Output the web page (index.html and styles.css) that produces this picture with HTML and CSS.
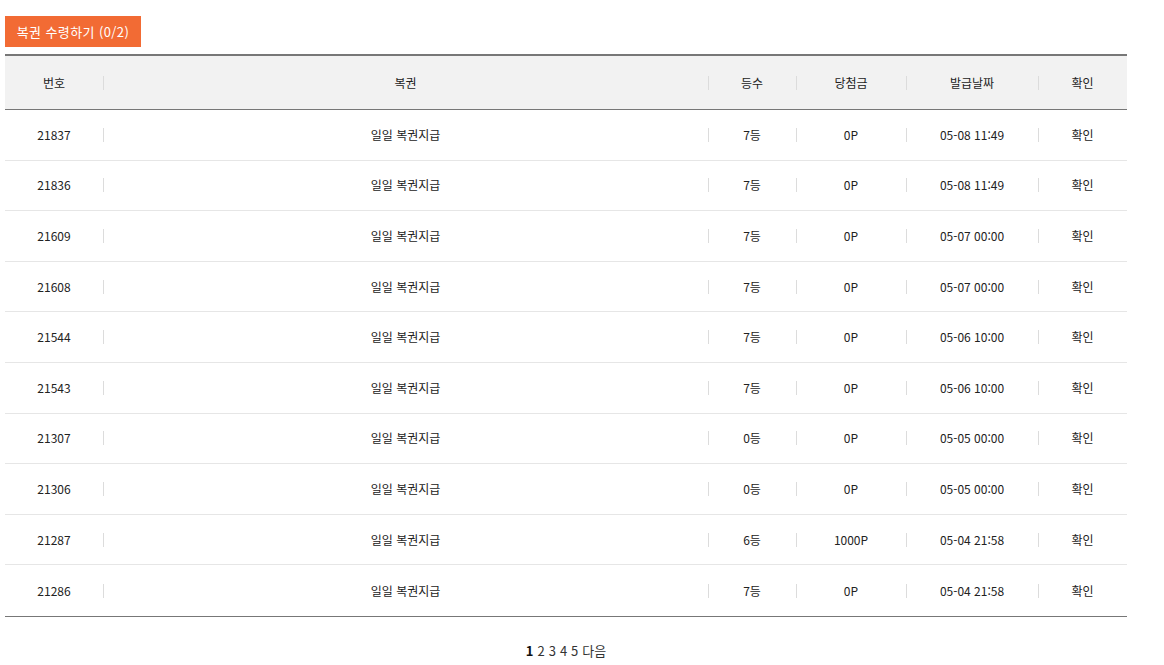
FILE: index.html
```html
<!DOCTYPE html>
<html lang="ko">
<head>
<meta charset="utf-8">
<title>복권</title>
<link rel="stylesheet" href="styles.css">
</head>
<body>
<div class="wrap">
  <div class="toolbar">
    <button class="claim-btn" type="button">복권 수령하기 (0/2)</button>
  </div>
  <div class="board">
    <div class="row head">
      <div class="cell">번호</div>
      <div class="cell sep">복권</div>
      <div class="cell sep">등수</div>
      <div class="cell sep">당첨금</div>
      <div class="cell sep">발급날짜</div>
      <div class="cell sep">확인</div>
    </div>
    <div class="row"><div class="cell">21837</div><div class="cell sep">일일 복권지급</div><div class="cell sep">7등</div><div class="cell sep">0P</div><div class="cell sep">05-08 11:49</div><div class="cell sep">확인</div></div>
    <div class="row"><div class="cell">21836</div><div class="cell sep">일일 복권지급</div><div class="cell sep">7등</div><div class="cell sep">0P</div><div class="cell sep">05-08 11:49</div><div class="cell sep">확인</div></div>
    <div class="row"><div class="cell">21609</div><div class="cell sep">일일 복권지급</div><div class="cell sep">7등</div><div class="cell sep">0P</div><div class="cell sep">05-07 00:00</div><div class="cell sep">확인</div></div>
    <div class="row"><div class="cell">21608</div><div class="cell sep">일일 복권지급</div><div class="cell sep">7등</div><div class="cell sep">0P</div><div class="cell sep">05-07 00:00</div><div class="cell sep">확인</div></div>
    <div class="row"><div class="cell">21544</div><div class="cell sep">일일 복권지급</div><div class="cell sep">7등</div><div class="cell sep">0P</div><div class="cell sep">05-06 10:00</div><div class="cell sep">확인</div></div>
    <div class="row"><div class="cell">21543</div><div class="cell sep">일일 복권지급</div><div class="cell sep">7등</div><div class="cell sep">0P</div><div class="cell sep">05-06 10:00</div><div class="cell sep">확인</div></div>
    <div class="row"><div class="cell">21307</div><div class="cell sep">일일 복권지급</div><div class="cell sep">0등</div><div class="cell sep">0P</div><div class="cell sep">05-05 00:00</div><div class="cell sep">확인</div></div>
    <div class="row"><div class="cell">21306</div><div class="cell sep">일일 복권지급</div><div class="cell sep">0등</div><div class="cell sep">0P</div><div class="cell sep">05-05 00:00</div><div class="cell sep">확인</div></div>
    <div class="row"><div class="cell">21287</div><div class="cell sep">일일 복권지급</div><div class="cell sep">6등</div><div class="cell sep">1000P</div><div class="cell sep">05-04 21:58</div><div class="cell sep">확인</div></div>
    <div class="row last"><div class="cell">21286</div><div class="cell sep">일일 복권지급</div><div class="cell sep">7등</div><div class="cell sep">0P</div><div class="cell sep">05-04 21:58</div><div class="cell sep">확인</div></div>
  </div>
  <div class="pager">
    <a class="page current">1</a>
    <a class="page">2</a>
    <a class="page">3</a>
    <a class="page">4</a>
    <a class="page">5</a>
    <a class="page">다음</a>
  </div>
</div>
</body>
</html>
```

FILE: styles.css
```css
html, body {
  margin: 0;
  padding: 0;
  background: #fff;
}
body {
  font-family: "Noto Sans CJK KR", "Noto Sans", sans-serif;
  font-size: 12px;
  color: #222;
}
.wrap {
  width: 1122px;
  padding: 16px 0 0 5px;
}
.toolbar {
  display: flex;
  height: 31px;
  margin-bottom: 7px;
}
.claim-btn {
  background: #f26b34;
  color: #fff;
  border: 0;
  margin: 0;
  height: 31px;
  width: 136px;
  padding: 0;
  font-family: "Noto Sans CJK KR", sans-serif;
  font-size: 13px;
  line-height: 31px;
  letter-spacing: 0.4px;
}
.board {
  border-top: 2px solid #777;
  border-bottom: 1px solid #777;
}
.row {
  display: grid;
  grid-template-columns: 98px 605px 88px 110px 132px 89px;
  height: 50.6px;
  box-sizing: border-box;
  border-bottom: 1px solid #e6e6e6;
}
.row.last {
  border-bottom: 0;
}
.row.head {
  height: 54px;
  background: #f2f2f2;
  border-bottom: 1px solid #777;
}
.cell {
  display: flex;
  align-items: center;
  justify-content: center;
  white-space: nowrap;
  padding-bottom: 1px;
}
.cell.sep {
  background: linear-gradient(#dcdcdc, #dcdcdc) left center / 1px 14px no-repeat;
}
.pager {
  display: flex;
  justify-content: center;
  gap: 4px;
  padding-top: 25px;
  font-family: "Noto Sans CJK KR", sans-serif;
  font-size: 13px;
  color: #333;
  line-height: 17px;
}
.page.current {
  font-weight: bold;
  color: #111;
}
```
